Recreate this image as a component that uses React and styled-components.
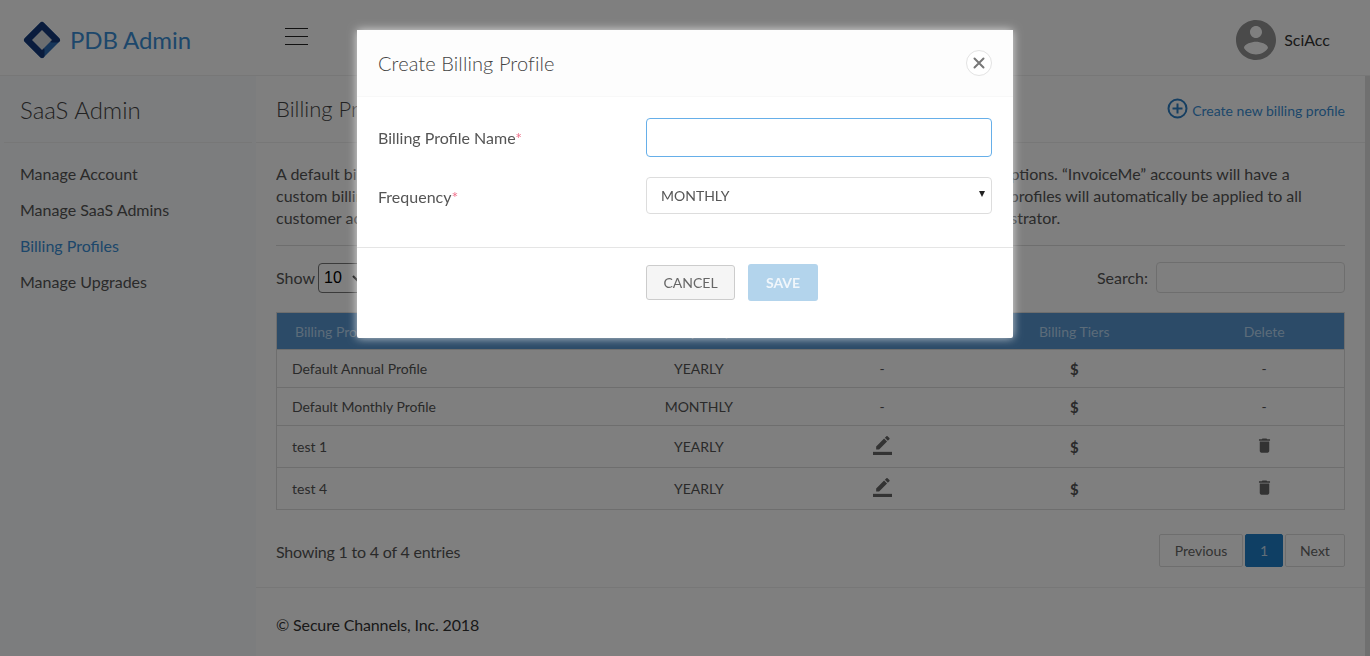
import React from "react";
import styled, { createGlobalStyle } from "styled-components";

const GlobalStyle = createGlobalStyle`
  * { box-sizing: border-box; }
  html, body { margin: 0; height: 100%; overflow: hidden; background: #fff; }
  body { font-family: Lato, "Liberation Sans", sans-serif; font-size: 16px; color: #555; }
`;

const rows = [
  { name: "Default Annual Profile", frequency: "YEARLY", height: 38, locked: true },
  { name: "Default Monthly Profile", frequency: "MONTHLY", height: 38, locked: true },
  { name: "test 1", frequency: "YEARLY", height: 42 },
  { name: "test 4", frequency: "YEARLY", height: 42 },
];

const Logo = () => (
  <svg width="38" height="38" viewBox="0 0 38 38">
    <path d="M19 3.5 L34.5 19 L19 34.5 L3.5 19 Z" fill="#2f6db5" stroke="#2f6db5" strokeWidth="5" strokeLinejoin="round" />
    <path d="M19 3.5 L34.5 19 L29 19 L19 9 L9 19 L19 29 L19 34.5 L3.5 19 Z" fill="#14397a" stroke="#14397a" strokeWidth="5" strokeLinejoin="round" />
    <path d="M19 9 L29 19 L19 29 L9 19 Z" fill="#d8dce0" />
  </svg>
);

const EditIcon = () => (
  <svg width="19" height="19" viewBox="0 0 24 24" fill="#666">
    <path d="M17.75 7L14 3.25l-10 10V17h3.75l10-10zm2.96-2.96c.39-.39.39-1.02 0-1.41L18.37.29c-.39-.39-1.02-.39-1.41 0L15 2.25 18.75 6l1.96-1.96z" />
    <path d="M0 20h24v4H0z" />
  </svg>
);

const TrashIcon = () => (
  <svg width="19" height="19" viewBox="0 0 24 24" fill="#666">
    <path d="M6 19c0 1.1.9 2 2 2h8c1.1 0 2-.9 2-2V7H6v12zM19 4h-3.5l-1-1h-5l-1 1H5v2h14V4z" />
  </svg>
);

const App = () => {
  return (
    <>
      <GlobalStyle />
      <Page>
        <Header>
          <Brand>
            <Logo />
            <BrandName>PDB Admin</BrandName>
          </Brand>
          <Burger>
            <span />
            <span />
            <span />
          </Burger>
          <User>
            <svg width="40" height="40" viewBox="2 2 20 20" fill="#949494">
              <path d="M12 2C6.48 2 2 6.48 2 12s4.48 10 10 10 10-4.48 10-10S17.52 2 12 2zm0 3c1.66 0 3 1.34 3 3s-1.34 3-3 3-3-1.34-3-3 1.34-3 3-3zm0 14.2c-2.5 0-4.71-1.28-6-3.22.03-1.99 4-3.08 6-3.08 1.99 0 5.97 1.09 6 3.08-1.29 1.94-3.5 3.22-6 3.22z" />
            </svg>
            <span>SciAcc</span>
          </User>
        </Header>
        <Layout>
          <Sidebar>
            <SideTitle>SaaS Admin</SideTitle>
            <Nav>
              <NavItem>Manage Account</NavItem>
              <NavItem>Manage SaaS Admins</NavItem>
              <NavItem $active>Billing Profiles</NavItem>
              <NavItem>Manage Upgrades</NavItem>
            </Nav>
          </Sidebar>
          <Main>
            <TitleRow>
              <PageTitle>Billing Profiles</PageTitle>
              <CreateLink>
                <svg width="21" height="21" viewBox="0 0 21 21" fill="none" stroke="#2c7ec4" strokeWidth="2">
                  <circle cx="10.5" cy="10.5" r="9" />
                  <path d="M10.5 5.5v10M5.5 10.5h10" />
                </svg>
                Create new billing profile
              </CreateLink>
            </TitleRow>
            <Content>
              <Intro>
                A default billing profile is applied to all customers who purchase Monthly or annual recurring SaaS subscriptions. “InvoiceMe” accounts will have a
                <br />
                custom billing profile that is assigned to them by the SaaS administrator. New and updated default billing profiles will automatically be applied to all
                <br />
                customer accounts, unless a custom profile has already been assigned to these accounts by a SaaS administrator.
              </Intro>
              <Controls>
                <ShowLabel>
                  Show
                  <LengthSelect defaultValue="10">
                    <option>10</option>
                    <option>25</option>
                  </LengthSelect>
                </ShowLabel>
                <SearchLabel>
                  Search:
                  <SearchInput />
                </SearchLabel>
              </Controls>
              <Table>
                <colgroup>
                  <col width="321" />
                  <col width="202" />
                  <col width="164" />
                  <col width="220" />
                  <col width="160" />
                </colgroup>
                <thead>
                  <tr>
                    <HeadCell $left>Billing Profile Name</HeadCell>
                    <HeadCell>Frequency</HeadCell>
                    <HeadCell>Edit</HeadCell>
                    <HeadCell>Billing Tiers</HeadCell>
                    <HeadCell>Delete</HeadCell>
                  </tr>
                </thead>
                <tbody>
                  {rows.map((row) => (
                    <Row key={row.name} $height={row.height}>
                      <Cell $left>{row.name}</Cell>
                      <Cell>{row.frequency}</Cell>
                      <Cell>{row.locked ? "-" : <EditIcon />}</Cell>
                      <Cell>
                        <Dollar>$</Dollar>
                      </Cell>
                      <Cell>{row.locked ? "-" : <TrashIcon />}</Cell>
                    </Row>
                  ))}
                </tbody>
              </Table>
              <TableFoot>
                <Entries>Showing 1 to 4 of 4 entries</Entries>
                <Pager>
                  <PageButton $width={84}>Previous</PageButton>
                  <PageButton $width={38} $current>1</PageButton>
                  <PageButton $width={60}>Next</PageButton>
                </Pager>
              </TableFoot>
            </Content>
            <Footer>© Secure Channels, Inc. 2018</Footer>
          </Main>
          <ScrollStrip />
        </Layout>
      </Page>
      <Backdrop />
      <Modal>
        <ModalHeader>
          <ModalTitle>Create Billing Profile</ModalTitle>
          <CloseButton>
            <svg width="12" height="12" viewBox="0 0 12 12" stroke="#777" strokeWidth="2" strokeLinecap="round">
              <path d="M1.5 1.5l9 9M10.5 1.5l-9 9" />
            </svg>
          </CloseButton>
        </ModalHeader>
        <ModalBody>
          <FieldLabel>
            Billing Profile Name<Required>*</Required>
          </FieldLabel>
          <NameInput />
          <FieldLabel>
            Frequency<Required>*</Required>
          </FieldLabel>
          <FrequencySelect>
            MONTHLY
            <Caret>▾</Caret>
          </FrequencySelect>
        </ModalBody>
        <ModalFooter>
          <CancelButton>CANCEL</CancelButton>
          <SaveButton>SAVE</SaveButton>
        </ModalFooter>
      </Modal>
    </>
  );
};

export default App;

const Page = styled.div`
  height: 656px;
  display: flex;
  flex-direction: column;
  overflow: hidden;
`;

const Header = styled.header`
  height: 76px;
  flex: none;
  padding-top: 4px;
  display: flex;
  align-items: center;
  border-bottom: 1px solid #eee;
  background: #fff;
`;

const Brand = styled.div`
  width: 285px;
  padding-left: 23px;
  display: flex;
  align-items: center;
  gap: 9px;
`;

const BrandName = styled.div`
  font-size: 24px;
  letter-spacing: -0.1px;
  color: #3a8fd6;
  line-height: 30px;
`;

const Burger = styled.div`
  width: 23px;
  height: 17px;
  margin-top: -7px;
  display: flex;
  flex-direction: column;
  justify-content: space-between;
  span {
    display: block;
    height: 1px;
    background: #222;
  }
`;

const User = styled.div`
  margin-left: auto;
  padding-right: 40px;
  display: flex;
  align-items: center;
  gap: 8px;
  font-size: 16px;
  color: #333;
`;

const Layout = styled.div`
  flex: 1;
  display: flex;
  min-height: 0;
`;

const Sidebar = styled.aside`
  width: 256px;
  flex: none;
  background: #f8fafc;
`;

const SideTitle = styled.div`
  height: 67px;
  margin: 0 4px;
  padding: 17px 16px 0;
  font-size: 24px;
  font-weight: 300;
  line-height: 34px;
  color: #444;
  border-bottom: 1px solid #eee;
`;

const Nav = styled.nav`
  padding: 13px 20px;
  display: flex;
  flex-direction: column;
`;

const NavItem = styled.div`
  height: 36px;
  line-height: 36px;
  color: ${(p) => (p.$active ? "#3a8fd6" : "#555")};
`;

const Main = styled.main`
  flex: 1;
  min-width: 0;
  background: #fff;
`;

const TitleRow = styled.div`
  height: 67px;
  padding: 0 20px;
  display: flex;
  justify-content: space-between;
  border-bottom: 1px solid #eee;
`;

const PageTitle = styled.div`
  font-size: 22px;
  font-weight: 300;
  line-height: 34px;
  margin-top: 16px;
  color: #444;
`;

const CreateLink = styled.div`
  margin-top: 22px;
  display: flex;
  align-items: flex-start;
  gap: 4px;
  font-size: 14px;
  line-height: 25px;
  color: #3a8fd6;
`;

const Content = styled.div`
  padding: 20px 20px 0;
  height: 445px;
  border-bottom: 1px solid #eee;
`;

const Intro = styled.p`
  margin: 0;
  padding-bottom: 16px;
  line-height: 22px;
  white-space: nowrap;
  overflow: hidden;
  border-bottom: 1px solid #ddd;
`;

const Controls = styled.div`
  margin-top: 16px;
  height: 31px;
  display: flex;
  justify-content: space-between;
  align-items: center;
`;

const ShowLabel = styled.label`
  display: flex;
  align-items: center;
  gap: 3px;
`;

const LengthSelect = styled.select`
  width: 48px;
  height: 30px;
  padding-left: 1px;
  font-family: "Liberation Sans", sans-serif;
  font-size: 16px;
  color: #000;
  background: #fff;
  border: 1px solid #767676;
  border-radius: 4px;
`;

const SearchLabel = styled.label`
  display: flex;
  align-items: center;
  gap: 8px;
`;

const SearchInput = styled.input`
  width: 189px;
  height: 31px;
  background: #fff;
  border: 1px solid #ddd;
  border-radius: 4px;
`;

const Table = styled.table`
  width: 1069px;
  margin-top: 19px;
  border-collapse: collapse;
  table-layout: fixed;
  font-size: 14px;
  border: 1px solid #ddd;
`;

const HeadCell = styled.th`
  height: 37px;
  padding: 0 0 0 ${(p) => (p.$left ? "18px" : "0")};
  background: #5896d0;
  color: #b9d8f3;
  font-weight: 400;
  text-align: ${(p) => (p.$left ? "left" : "center")};
`;

const Row = styled.tr`
  height: ${(p) => p.$height}px;
  border-top: 1px solid #ddd;
`;

const Cell = styled.td`
  padding: 0 0 0 ${(p) => (p.$left ? "15px" : "0")};
  text-align: ${(p) => (p.$left ? "left" : "center")};
  svg {
    display: block;
    margin: -3px auto 0;
  }
`;

const Dollar = styled.span`
  font-weight: 700;
  font-size: 15px;
`;

const TableFoot = styled.div`
  margin-top: 24px;
  display: flex;
  justify-content: space-between;
  align-items: center;
`;

const Entries = styled.span`
  letter-spacing: -0.2px;
  margin-top: 2px;
`;

const Pager = styled.div`
  display: flex;
  gap: 2px;
`;

const PageButton = styled.div`
  width: ${(p) => p.$width}px;
  height: 33px;
  line-height: 32px;
  font-size: 14px;
  text-align: center;
  border-radius: 2px;
  border: 1px solid ${(p) => (p.$current ? "#1f7fc8" : "#ddd")};
  background: ${(p) => (p.$current ? "#1f7fc8" : "#fff")};
  color: ${(p) => (p.$current ? "#c5dcef" : "#666")};
`;

const Footer = styled.footer`
  padding: 27px 20px;
  line-height: 20px;
  letter-spacing: -0.15px;
  color: #333;
`;

const ScrollStrip = styled.div`
  width: 5px;
  flex: none;
  background: #e0e0e0;
`;

const Backdrop = styled.div`
  position: fixed;
  inset: 0;
  background: rgba(0, 0, 0, 0.5);
`;

const Modal = styled.div`
  position: fixed;
  top: 30px;
  left: 357px;
  width: 656px;
  height: 308px;
  background: #fff;
  border-radius: 2px;
  box-shadow: 0 0 10px rgba(255, 255, 255, 0.75);
`;

const ModalHeader = styled.div`
  height: 67px;
  padding: 0 21px;
  display: flex;
  align-items: center;
  justify-content: space-between;
  background: #fdfdfd;
  border-bottom: 1px solid #f8f8f8;
`;

const ModalTitle = styled.div`
  font-size: 20px;
  font-weight: 300;
  letter-spacing: 0.1px;
  color: #444;
`;

const CloseButton = styled.div`
  width: 26px;
  height: 26px;
  display: flex;
  align-items: center;
  justify-content: center;
  border: 1px solid #e3e3e3;
  border-radius: 50%;
  background: #fff;
`;

const ModalBody = styled.div`
  height: 151px;
  padding: 21px 21px 0;
  display: grid;
  grid-template-columns: 268px 346px;
  grid-template-rows: 39px 37px;
  row-gap: 20px;
  border-bottom: 1px solid #e5e5e5;
`;

const FieldLabel = styled.div`
  line-height: 39px;
  color: #555;
`;

const Required = styled.span`
  color: #f0728c;
`;

const NameInput = styled.input`
  height: 39px;
  width: 346px;
  background: #fff;
  border: 1px solid #66afe9;
  border-radius: 4px;
  outline: none;
`;

const FrequencySelect = styled.div`
  height: 37px;
  padding: 0 6px 0 14px;
  display: flex;
  align-items: center;
  justify-content: space-between;
  font-size: 14px;
  color: #555;
  background: #fff;
  border: 1px solid #ddd;
  border-radius: 4px;
`;

const Caret = styled.span`
  font-size: 12px;
  line-height: 12px;
  margin-top: -5px;
  color: #222;
`;

const ModalFooter = styled.div`
  padding: 16px 0 0 289px;
  display: flex;
  align-items: center;
  gap: 13px;
`;

const CancelButton = styled.div`
  width: 89px;
  height: 35px;
  line-height: 34px;
  text-align: center;
  font-size: 14px;
  color: #666;
  background: #f5f5f5;
  border: 1px solid #ccc;
  border-radius: 3px;
`;

const SaveButton = styled.div`
  width: 70px;
  height: 37px;
  line-height: 37px;
  text-align: center;
  font-size: 14px;
  font-weight: 700;
  color: #f0f6fb;
  background: #b3d4ec;
  border-radius: 3px;
`;
